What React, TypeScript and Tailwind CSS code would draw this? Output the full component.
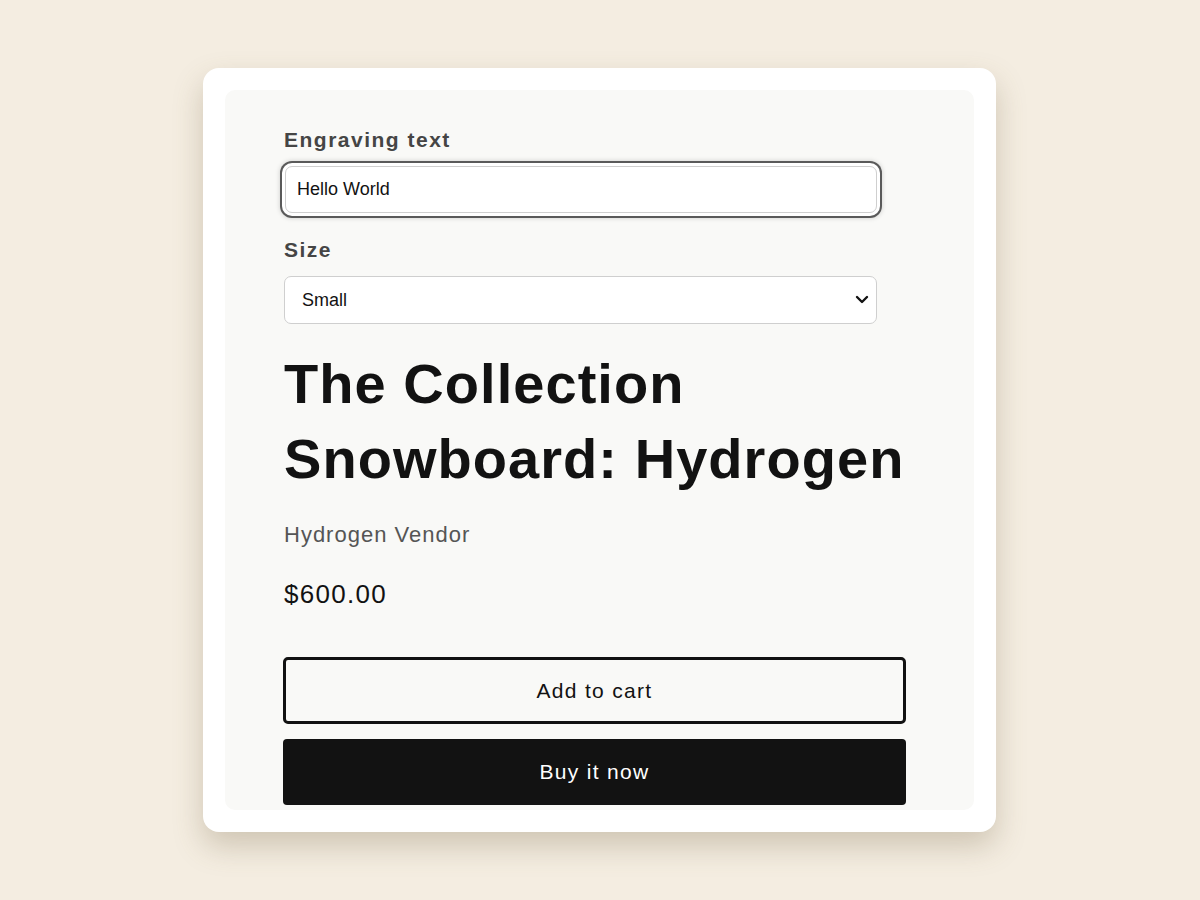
import React, { useState } from 'react';

const sizes = ['Small', 'Medium', 'Large'];

export default function App() {
  const [engraving, setEngraving] = useState('Hello World');
  const [size, setSize] = useState('Small');

  return (
    <div className="min-h-[900px] w-full bg-[#f4ede1] pt-[68px] font-['Liberation_Sans',Arial,sans-serif]">
      <div className="ml-[203px] w-[793px] rounded-[16px] bg-white p-[22px] shadow-[0_14px_30px_rgba(110,95,60,0.28)]">
        <div className="rounded-[10px] bg-[#f9f9f7] pl-[59px] pr-[68px] pt-[37px] pb-[5px]">
          {/* Engraving field */}
          <label className="block text-[21px] leading-[25px] font-bold tracking-[1.5px] text-[#454545]">
            Engraving text
          </label>
          <input
            type="text"
            value={engraving}
            onChange={(e) => setEngraving(e.target.value)}
            className="mt-[14px] ml-[1px] block h-[47px] w-[592px] rounded-[7px] border border-[#cfcfcf] bg-white px-[11px] text-[18px] text-[#121212] outline-none shadow-[0_0_0_3px_#fff,0_0_0_5px_#5a5a5a,0_0_5px_5px_rgba(0,0,0,0.18)]"
          />

          {/* Size select */}
          <label className="mt-[24px] block text-[21px] leading-[25px] font-bold tracking-[1.5px] text-[#454545]">
            Size
          </label>
          <div className="relative mt-[14px] w-[593px]">
            <select
              value={size}
              onChange={(e) => setSize(e.target.value)}
              className="block h-[48px] w-full appearance-none rounded-[7px] border border-[#cfcfcf] bg-white pl-[17px] pr-[36px] text-[18px] text-[#121212] outline-none"
            >
              {sizes.map((s) => (
                <option key={s} value={s}>
                  {s}
                </option>
              ))}
            </select>
            <svg
              className="pointer-events-none absolute right-[8px] top-[19px] h-[9px] w-[14px]"
              viewBox="0 0 14 9"
              fill="none"
            >
              <path d="M2 2l5 5 5-5" stroke="#121212" strokeWidth="2.4" strokeLinecap="round" strokeLinejoin="round" />
            </svg>
          </div>

          {/* Product info */}
          <h1 className="mt-[22px] text-[56px] leading-[75px] font-bold tracking-[1.05px] text-[#121212]">
            The Collection Snowboard: Hydrogen
          </h1>
          <p className="mt-[22px] text-[22px] leading-[33px] tracking-[1px] text-[#555555]">
            Hydrogen Vendor
          </p>
          <p className="mt-[24px] text-[26px] leading-[39px] tracking-[1.3px] text-[#121212]">
            $600.00
          </p>

          {/* Actions */}
          <div className="mt-[43px] -ml-[1px] flex flex-col gap-[15px]">
            <button className="h-[67px] w-full rounded-[5px] border-[3px] border-[#121212] bg-transparent text-[21px] tracking-[1.3px] text-[#121212]">
              Add to cart
            </button>
            <button className="h-[66px] w-full rounded-[4px] bg-[#121212] text-[21px] tracking-[1.3px] text-white">
              Buy it now
            </button>
          </div>
        </div>
      </div>
    </div>
  );
}
